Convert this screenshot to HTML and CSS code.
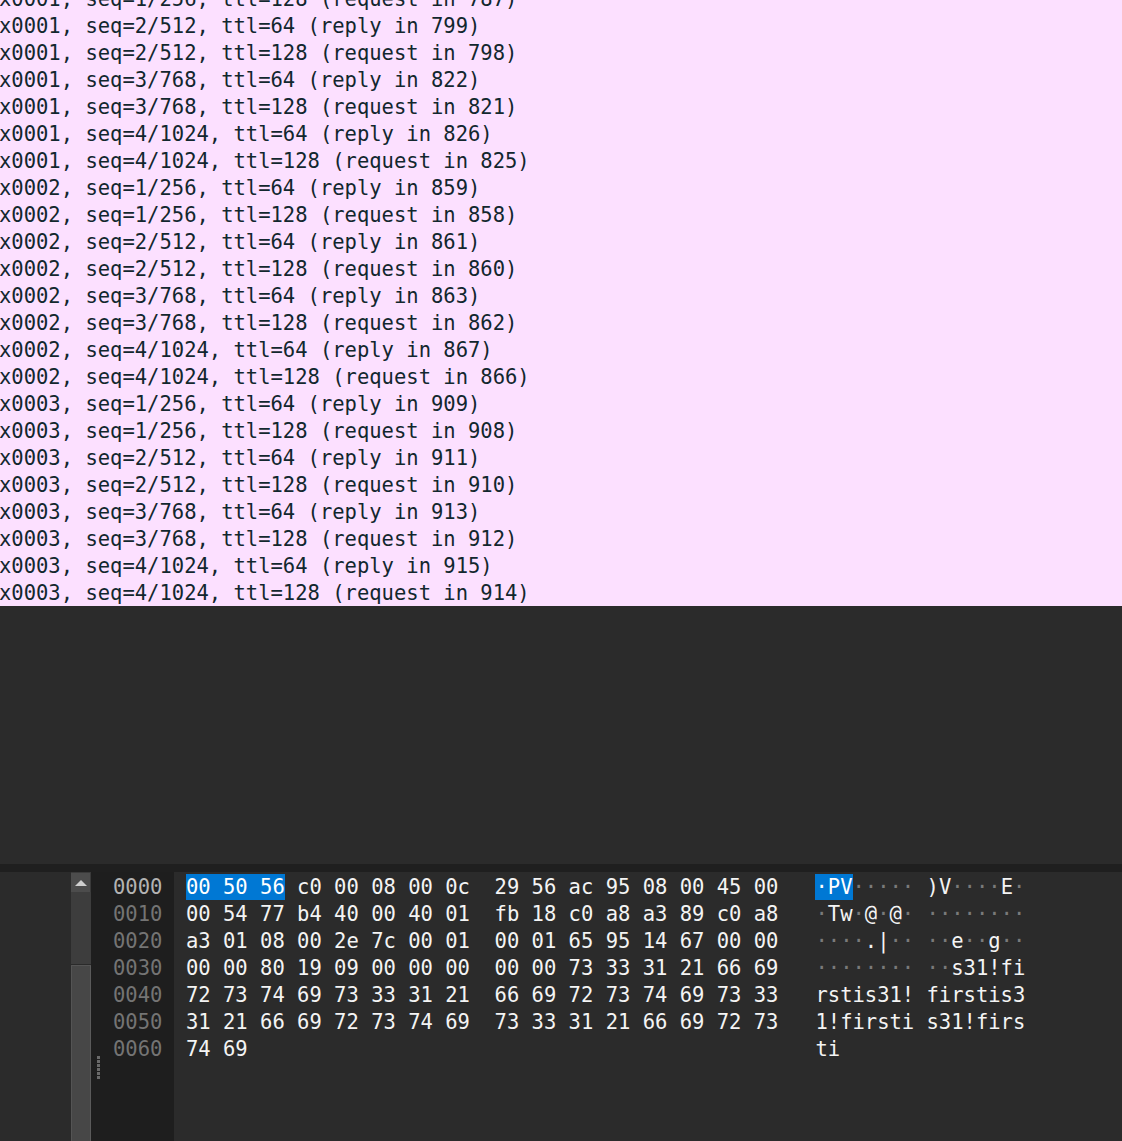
FILE: index.html
```html
<!DOCTYPE html>
<html>
<head>
<meta charset="utf-8">
<link rel="stylesheet" href="styles.css">
</head>
<body>
<div class="app">
  <div class="packet-list">
    <div class="rows">
      <div class="row">x0001, seq=1/256, ttl=128 (request in 787)</div>
      <div class="row">x0001, seq=2/512, ttl=64 (reply in 799)</div>
      <div class="row">x0001, seq=2/512, ttl=128 (request in 798)</div>
      <div class="row">x0001, seq=3/768, ttl=64 (reply in 822)</div>
      <div class="row">x0001, seq=3/768, ttl=128 (request in 821)</div>
      <div class="row">x0001, seq=4/1024, ttl=64 (reply in 826)</div>
      <div class="row">x0001, seq=4/1024, ttl=128 (request in 825)</div>
      <div class="row">x0002, seq=1/256, ttl=64 (reply in 859)</div>
      <div class="row">x0002, seq=1/256, ttl=128 (request in 858)</div>
      <div class="row">x0002, seq=2/512, ttl=64 (reply in 861)</div>
      <div class="row">x0002, seq=2/512, ttl=128 (request in 860)</div>
      <div class="row">x0002, seq=3/768, ttl=64 (reply in 863)</div>
      <div class="row">x0002, seq=3/768, ttl=128 (request in 862)</div>
      <div class="row">x0002, seq=4/1024, ttl=64 (reply in 867)</div>
      <div class="row">x0002, seq=4/1024, ttl=128 (request in 866)</div>
      <div class="row">x0003, seq=1/256, ttl=64 (reply in 909)</div>
      <div class="row">x0003, seq=1/256, ttl=128 (request in 908)</div>
      <div class="row">x0003, seq=2/512, ttl=64 (reply in 911)</div>
      <div class="row">x0003, seq=2/512, ttl=128 (request in 910)</div>
      <div class="row">x0003, seq=3/768, ttl=64 (reply in 913)</div>
      <div class="row">x0003, seq=3/768, ttl=128 (request in 912)</div>
      <div class="row">x0003, seq=4/1024, ttl=64 (reply in 915)</div>
      <div class="row">x0003, seq=4/1024, ttl=128 (request in 914)</div>
    </div>
  </div>

  <div class="details"></div>
  <div class="splitter"></div>

  <div class="bytes">
    <div class="bytes-left"></div>
    <div class="scrollbar">
      <div class="sb-up"><span class="sb-arrow"></span></div>
      <div class="sb-track"></div>
      <div class="sb-thumb"></div>
    </div>
    <div class="gutter">
      <div class="off sel">0000</div>
      <div class="off">0010</div>
      <div class="off">0020</div>
      <div class="off">0030</div>
      <div class="off">0040</div>
      <div class="off">0050</div>
      <div class="off">0060</div>
      <div class="grip"><i></i><i></i><i></i><i></i><i></i><i></i></div>
    </div>
    <div class="hex">
      <div class="hl"><span class="hsel">00 50 56</span> c0 00 08 00 0c  29 56 ac 95 08 00 45 00   <span class="asel"><span class="d">·</span>PV</span><span class="d">·····</span> )V<span class="d">····</span>E<span class="d">·</span></div>
      <div class="hl">00 54 77 b4 40 00 40 01  fb 18 c0 a8 a3 89 c0 a8   <span class="d">·</span>Tw<span class="d">·</span>@<span class="d">·</span>@<span class="d">·</span> <span class="d">········</span></div>
      <div class="hl">a3 01 08 00 2e 7c 00 01  00 01 65 95 14 67 00 00   <span class="d">····</span>.|<span class="d">··</span> <span class="d">··</span>e<span class="d">··</span>g<span class="d">··</span></div>
      <div class="hl">00 00 80 19 09 00 00 00  00 00 73 33 31 21 66 69   <span class="d">········</span> <span class="d">··</span>s31!fi</div>
      <div class="hl">72 73 74 69 73 33 31 21  66 69 72 73 74 69 73 33   rstis31! firstis3</div>
      <div class="hl">31 21 66 69 72 73 74 69  73 33 31 21 66 69 72 73   1!firsti s31!firs</div>
      <div class="hl">74 69                                              ti</div>
    </div>
  </div>
</div>
</body>
</html>
```

FILE: styles.css
```css
html, body {
  margin: 0;
  padding: 0;
  background: #2b2b2b;
}

.app {
  width: 1122px;
  height: 1141px;
  overflow: hidden;
  display: flex;
  flex-direction: column;
  font-family: "DejaVu Sans Mono", "Liberation Mono", monospace;
  font-size: 20.5px;
}

.packet-list {
  height: 606px;
  flex: 0 0 606px;
  background: #fce0ff;
  overflow: hidden;
}

.rows {
  margin-top: -14px;
  margin-left: -1px;
}

.row {
  height: 27px;
  line-height: 27px;
  white-space: pre;
  color: #12272e;
}

.details {
  flex: 0 0 258px;
  background: #2b2b2b;
}

.splitter {
  flex: 0 0 8px;
  background: #1f1f1f;
}

.bytes {
  flex: 1 1 auto;
  display: flex;
  background: #2b2b2b;
  min-height: 0;
}

.bytes-left {
  flex: 0 0 71px;
  background: #2b2b2b;
}

.scrollbar {
  flex: 0 0 20px;
  display: flex;
  flex-direction: column;
  padding-top: 1px;
  background: #3a3a3a;
}

.sb-up {
  flex: 0 0 19px;
  background: #4c4c4c;
  display: flex;
  align-items: center;
  justify-content: center;
  border-right: 1px solid #3a3a3a;
  box-sizing: border-box;
}

.sb-arrow {
  width: 0;
  height: 0;
  border-left: 6px solid transparent;
  border-right: 6px solid transparent;
  border-bottom: 6px solid #cfcfcf;
}

.sb-track {
  flex: 0 0 72px;
  background: #3d3d3d;
  border-bottom: 1px solid #2a2a2a;
}

.sb-thumb {
  flex: 1 1 auto;
  background: #474747;
  border-left: 1px solid #545454;
  border-right: 1px solid #5a5a5a;
  border-top: 1px solid #555555;
}

.gutter {
  position: relative;
  flex: 0 0 83px;
  background: #1e1e1e;
  padding-top: 2px;
  box-sizing: border-box;
}

.off {
  height: 27px;
  line-height: 27px;
  padding-left: 22px;
  color: #747474;
  white-space: pre;
}

.off.sel {
  color: #b3b3b3;
}

.grip {
  position: absolute;
  left: 6px;
  top: 184px;
  display: flex;
  flex-direction: column;
  gap: 1px;
}

.grip i {
  display: block;
  width: 3px;
  height: 3px;
  background: #6a6a6a;
}

.hex {
  flex: 1 1 auto;
  padding-top: 2px;
  padding-left: 12px;
  color: #f4f4f4;
}

.hl {
  height: 27px;
  line-height: 27px;
  white-space: pre;
}

.hsel,
.asel {
  background: #0078d4;
  color: #ffffff;
  display: inline-block;
  height: 26px;
  line-height: 27px;
}

.d {
  color: #7a7a7a;
}

.asel .d {
  color: #ffffff;
}
```
